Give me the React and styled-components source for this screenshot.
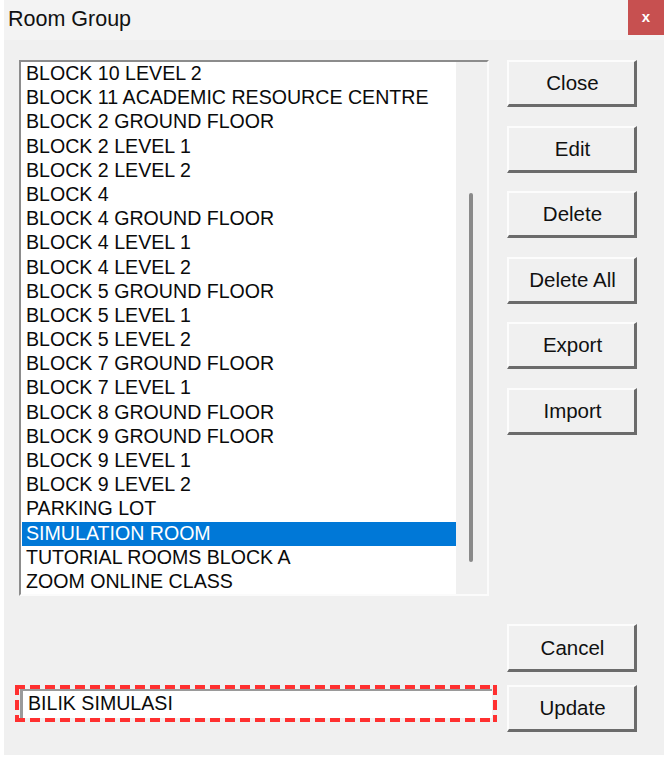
import styled, { createGlobalStyle } from "styled-components";

const GlobalStyle = createGlobalStyle`
	body {
		margin: 0;
		background: #ffffff;
		font-family: "Liberation Sans", Arial, sans-serif;
	}
`;

const rooms = [
	"BLOCK 10 LEVEL 2",
	"BLOCK 11 ACADEMIC RESOURCE CENTRE",
	"BLOCK 2 GROUND FLOOR",
	"BLOCK 2 LEVEL 1",
	"BLOCK 2 LEVEL 2",
	"BLOCK 4",
	"BLOCK 4 GROUND FLOOR",
	"BLOCK 4 LEVEL 1",
	"BLOCK 4 LEVEL 2",
	"BLOCK 5 GROUND FLOOR",
	"BLOCK 5 LEVEL 1",
	"BLOCK 5 LEVEL 2",
	"BLOCK 7 GROUND FLOOR",
	"BLOCK 7 LEVEL 1",
	"BLOCK 8 GROUND FLOOR",
	"BLOCK 9 GROUND FLOOR",
	"BLOCK 9 LEVEL 1",
	"BLOCK 9 LEVEL 2",
	"PARKING LOT",
	"SIMULATION ROOM",
	"TUTORIAL ROOMS BLOCK A",
	"ZOOM ONLINE CLASS",
];

const actions = ["Close", "Edit", "Delete", "Delete All", "Export", "Import"];

export default function App() {
	return (
		<>
			<GlobalStyle />
			<Window>
				<TitleBar>
					<Title>Room Group</Title>
					<CloseX>x</CloseX>
				</TitleBar>
				<Body>
					<ListBox>
						<ListItems>
							{rooms.map((room) => (
								<Item key={room} $selected={room === "SIMULATION ROOM"}>
									{room}
								</Item>
							))}
						</ListItems>
						<ScrollTrack>
							<Thumb />
						</ScrollTrack>
					</ListBox>
					<ButtonStack>
						{actions.map((a) => (
							<Button key={a}>{a}</Button>
						))}
					</ButtonStack>
					<CancelButton>Cancel</CancelButton>
					<FocusRing>
						<TextBox>BILIK SIMULASI</TextBox>
					</FocusRing>
					<Button>Update</Button>
				</Body>
			</Window>
		</>
	);
}

const Window = styled.div`
	margin-left: 4px;
	width: 660px;
	height: 755px;
	background: #f0f0f0;
	display: flex;
	flex-direction: column;
`;

const TitleBar = styled.div`
	height: 40px;
	display: flex;
	align-items: flex-start;
	justify-content: space-between;
	background: #f3f3f3;
`;

const Title = styled.div`
	padding: 7px 0 0 4px;
	font-size: 21.5px;
	color: #111;
`;

const CloseX = styled.div`
	width: 36px;
	height: 35px;
	background: #c75050;
	color: #fff;
	font-weight: bold;
	font-size: 15px;
	display: flex;
	align-items: center;
	justify-content: center;
	padding-bottom: 3px;
	box-sizing: border-box;
`;

const Body = styled.div`
	padding: 20px 0 0 15px;
	display: grid;
	grid-template-columns: 470px 130px;
	column-gap: 18px;
	align-items: start;
`;

const ListBox = styled.div`
	height: 536px;
	box-sizing: border-box;
	border-top: 2px solid #8c8c8c;
	border-left: 2px solid #8c8c8c;
	border-right: 2px solid #fbfbfb;
	border-bottom: 2px solid #fbfbfb;
	background: #fff;
	display: flex;
	padding-left: 1px;
`;

const ListItems = styled.div`
	flex: 1;
	display: flex;
	flex-direction: column;
`;

const Item = styled.div`
	height: 24.2px;
	line-height: 23.6px;
	padding-left: 4px;
	font-size: 19.6px;
	white-space: nowrap;
	color: ${(p) => (p.$selected ? "#fff" : "#0a0a0a")};
	background: ${(p) => (p.$selected ? "#0078d7" : "transparent")};
`;

const ScrollTrack = styled.div`
	width: 31px;
	background: #f0f0f0;
	display: flex;
	justify-content: center;
	padding-top: 131px;
	box-sizing: border-box;
`;

const Thumb = styled.div`
	width: 4px;
	height: 369px;
	background: #8a8a8a;
	border-radius: 2px;
	margin-right: 1px;
`;

const ButtonStack = styled.div`
	display: flex;
	flex-direction: column;
	gap: 18.5px;
`;

const Button = styled.div`
	height: 47px;
	box-sizing: border-box;
	background: #f0f0f0;
	border-top: 2px solid #fcfcfc;
	border-left: 2px solid #fcfcfc;
	border-right: 3px solid #6b6b6b;
	border-bottom: 3px solid #6b6b6b;
	display: flex;
	align-items: center;
	justify-content: center;
	font-size: 20.5px;
	color: #111;
	padding-left: 2px;
`;

const CancelButton = styled(Button)`
	grid-column: 2;
	margin-top: 28px;
	height: 48px;
	margin-bottom: 13px;
`;

const dashX = "repeating-linear-gradient(90deg, #ff3030 0 10px, transparent 10px 15px)";
const dashY = "repeating-linear-gradient(180deg, #ff3030 0 10px, transparent 10px 15px)";

const FocusRing = styled.div`
	height: 37px;
	width: 482px;
	margin-left: -4px;
	box-sizing: border-box;
	padding: 4px 5px 4px 5px;
	background:
		${dashX} left top / 100% 4px no-repeat,
		${dashX} left bottom / 100% 4px no-repeat,
		${dashY} left top / 4px 100% no-repeat,
		${dashY} right top / 4px 100% no-repeat;
`;

const TextBox = styled.div`
	height: 100%;
	box-sizing: border-box;
	background: #fff;
	border-top: 2px solid #9a9a9a;
	border-left: 3px solid #9a9a9a;
	padding-left: 5px;
	font-size: 19.6px;
	line-height: 25px;
	color: #0a0a0a;
	white-space: nowrap;
`;
